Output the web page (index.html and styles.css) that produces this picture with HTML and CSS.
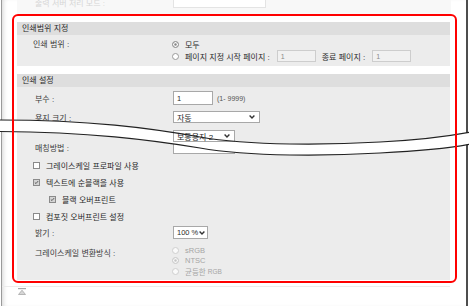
FILE: index.html
```html
<!DOCTYPE html>
<html lang="ko">
<head>
  <meta charset="UTF-8" />
  <title>인쇄 설정</title>
  <link rel="stylesheet" href="styles.css">
</head>
<body>
  <div class="window">
    <div class="prev">
      <span class="prev-label">출력 서버 처리 모드 :</span>
      <span class="prev-box"></span>
    </div>

    <div class="highlight">
      <div class="panel">
        <section class="group">
          <div class="group-head">인쇄범위 지정</div>
          <div class="group-body range">
            <div class="row top">
              <div class="label">인쇄 범위 :</div>
              <div class="radios">
                <div class="radio on"><i></i>모두</div>
                <div class="radio tall"><i></i>페이지 지정 시작 페이지 :<span class="field">1</span>종료 페이지 :<span class="field">1</span></div>
              </div>
            </div>
          </div>
        </section>

        <section class="group">
          <div class="group-head">인쇄 설정</div>
          <div class="group-body settings">
            <div class="row r-copies">
              <div class="label">부수 :</div>
              <div class="input">1</div>
              <span class="hint">(1- 9999)</span>
            </div>
            <div class="row r-size">
              <div class="label">용지 크기 :</div>
              <div class="select w-size">자동<svg class="chev" viewBox="0 0 6 4"><path d="M0.6 0.6 L3 3 L5.4 0.6"/></svg></div>
            </div>
            <div class="row r-paper">
              <div class="label"></div>
              <div class="select w-paper paper-select">보통용지 2<svg class="chev" viewBox="0 0 6 4"><path d="M0.6 0.6 L3 3 L5.4 0.6"/></svg></div>
            </div>
            <div class="row r-match">
              <div class="label">매칭방법 :</div>
              <div class="select w-paper">&nbsp;</div>
            </div>

            <div class="checks">
              <div class="check"><i></i>그레이스케일 프로파일 사용</div>
              <div class="check on"><i><svg viewBox="0 0 7 7"><path d="M1.2 3.5 L2.8 5 L5.8 1.5"/></svg></i>텍스트에 순블랙을 사용</div>
              <div class="check on sub"><i><svg viewBox="0 0 7 7"><path d="M1.2 3.5 L2.8 5 L5.8 1.5"/></svg></i>블랙 오버프린트</div>
              <div class="check"><i></i>컴포짓 오버프린트 설정</div>
            </div>

            <div class="row r-bright">
              <div class="label">밝기 :</div>
              <div class="select w-bright">100 %<svg class="chev" viewBox="0 0 6 4"><path d="M0.6 0.6 L3 3 L5.4 0.6"/></svg></div>
            </div>
            <div class="row top r-conv">
              <div class="label">그레이스케일 변환방식 :</div>
              <div class="radios off">
                <div class="radio"><i></i>sRGB</div>
                <div class="radio on"><i></i>NTSC</div>
                <div class="radio"><i></i>균등한 <span class="small">RGB</span></div>
              </div>
            </div>
          </div>
        </section>
      </div>
    </div>

    <div class="foot">
      <svg class="to-top" viewBox="0 0 8 7"><rect x="0" y="0" width="8" height="1.2"/><path d="M4 2.2 L7.5 6.5 L0.5 6.5 Z"/></svg>
    </div>

    <!-- omitted part of the window -->
    <svg class="cut cut-fill" viewBox="0 0 469 306">
      <path d="M-2,120 C 90,120 150,128 200,137 C 250,146 330,145 380,142 C 420,140 450,136 471,132 L471,144 C 450,148 420,151 380,153 C 330,156 250,157 200,148 C 150,140 90,132 -2,131.5 Z"/>
    </svg>
    <svg class="cut cut-lines" viewBox="0 0 469 306">
      <path d="M-2,120 C 90,120 150,128 200,137 C 250,146 330,145 380,142 C 420,140 450,136 471,132"/>
      <path d="M-2,131.5 C 90,132 150,140 200,148 C 250,157 330,156 380,153 C 420,151 450,148 471,144"/>
    </svg>
  </div>
</body>
</html>
```

FILE: styles.css
```css
* {
  box-sizing: border-box;
}

body {
  margin: 0;
  background: #fff;
  font-family: "Liberation Sans", "Noto Sans CJK KR", sans-serif;
  font-size: 8px;
  color: #2a2a2a;
}

.window {
  position: relative;
  width: 467px;
  height: 306px;
  margin-left: 1px;
  border-left: 1px solid #9a9a9a;
  border-right: 2px solid #4d4d4d;
  box-shadow: inset 4px 0 5px -3px rgba(0, 0, 0, 0.18);
}

/* faded row of the previous group */
.prev {
  display: flex;
  align-items: flex-start;
  height: 14px;
  margin: 0 15px;
  padding-left: 18px;
  background: #f8f8f8;
}

.prev-label {
  width: 138px;
  line-height: 7px;
  color: #d6d6d6;
}

.prev-box {
  width: 93px;
  height: 8px;
  border: 1px solid #e4e4e4;
  border-top: 0;
  background: #fff;
}

.highlight {
  position: relative;
  width: 445px;
  margin-left: 10px;
  padding: 8px 7px 3px 5px;
}

.highlight::after {
  content: "";
  position: absolute;
  inset: 0;
  border: 2px solid #ff0000;
  border-radius: 6px;
  z-index: 4;
}

.group + .group {
  margin-top: 8px;
}

.group-head {
  height: 13px;
  line-height: 13px;
  padding-left: 5px;
  background: #dedede;
}

.group-body {
  background: #ececec;
  padding-left: 18px;
}

.range {
  height: 31px;
  padding-top: 4px;
}

.settings {
  height: 193px;
  padding-top: 4px;
}

.row {
  display: flex;
  align-items: center;
}

.row.top {
  align-items: flex-start;
}

.label {
  flex: none;
  width: 138px;
  color: #3a3a3a;
}

.range .label {
  line-height: 11px;
  margin-left: -2px;
  margin-right: 2px;
}

/* radios */
.radio {
  display: flex;
  align-items: center;
  height: 11px;
  white-space: nowrap;
}

.radio.tall {
  height: 12px;
}

.radio i {
  flex: none;
  width: 7px;
  height: 7px;
  margin: 0 6px 0 -1px;
  border: 1px solid #999;
  border-radius: 50%;
  background: #fff;
}

.radio.on i {
  background: #858585;
  box-shadow: inset 0 0 0 1.2px #fff;
}

.field {
  display: inline-flex;
  align-items: center;
  width: 39px;
  height: 12px;
  margin: 0 6px 0 7px;
  padding-left: 3px;
  border: 1px solid #cdcdcd;
  background: #f1f1f1;
  color: #8a8a8a;
  font-size: 7px;
}

.radios.off .radio {
  height: 10.5px;
  color: #a5a5a5;
  font-size: 7.5px;
}

.radios.off .radio i {
  border-color: #cfcfcf;
  background: #fafafa;
}

.radios.off .radio.on i {
  background: #c4c4c4;
  box-shadow: inset 0 0 0 1.2px #fafafa;
}

.small {
  margin-left: 2px;
  font-size: 6.5px;
}

/* inputs and selects */
.input {
  display: flex;
  align-items: center;
  width: 40px;
  height: 14px;
  padding-left: 3px;
  border: 1px solid #a8a8a8;
  background: #fff;
  font-size: 7.5px;
}

.hint {
  margin-left: 4px;
  color: #555;
  font-size: 7px;
}

.select {
  display: flex;
  align-items: center;
  justify-content: space-between;
  height: 12px;
  padding: 0 4px 0 3px;
  border: 1px solid #a8a8a8;
  background: #fff;
  white-space: nowrap;
}

.chev {
  width: 6px;
  height: 4px;
  fill: none;
  stroke: #333;
  stroke-width: 1.4;
}

.w-size {
  width: 87px;
}

.w-paper {
  width: 62px;
}

.w-bright {
  width: 35px;
  height: 13px;
  padding-right: 2px;
  font-size: 7.5px;
}

.paper-select {
  position: relative;
  z-index: 2;
}

.r-copies {
  height: 14px;
}

.r-size {
  height: 12px;
  margin-top: 6px;
}

.r-paper {
  height: 12px;
  margin-top: 7px;
}

.r-match {
  height: 12px;
}

.r-match .label {
  margin-top: -2px;
}

.r-bright {
  height: 13px;
  margin-top: 1px;
}

.r-conv {
  margin-top: 6px;
}

.r-conv .label {
  padding-top: 2px;
}

/* checkboxes */
.checks {
  margin-top: 3px;
  margin-left: -2px;
}

.check {
  display: flex;
  align-items: center;
  height: 17px;
}

.check.sub {
  padding-left: 16px;
}

.check i {
  flex: none;
  display: flex;
  width: 7px;
  height: 7px;
  margin-right: 6px;
  border: 1px solid #8a8a8a;
  background: #fff;
}

.check.on i {
  background: #d4d4d4;
}

.check i svg {
  width: 100%;
  height: 100%;
  fill: none;
  stroke: #555;
  stroke-width: 1.3;
}

.foot {
  width: 448px;
  margin-top: 3px;
  padding: 1px 0 0 16px;
  border-top: 1px solid #ececec;
}

.to-top {
  display: block;
  width: 8px;
  height: 7px;
  fill: #d6d6d6;
}

.to-top rect {
  fill: #a8a8a8;
}

.to-top path {
  stroke: #a8a8a8;
  stroke-width: 0.8;
}

/* torn strip */
.cut {
  position: absolute;
  top: 0;
  left: -2px;
  width: 469px;
  height: 306px;
  pointer-events: none;
}

.cut-fill {
  z-index: 1;
  fill: #fff;
}

.cut-lines {
  z-index: 3;
  fill: none;
  stroke: #222;
  stroke-width: 1.2;
}
```
